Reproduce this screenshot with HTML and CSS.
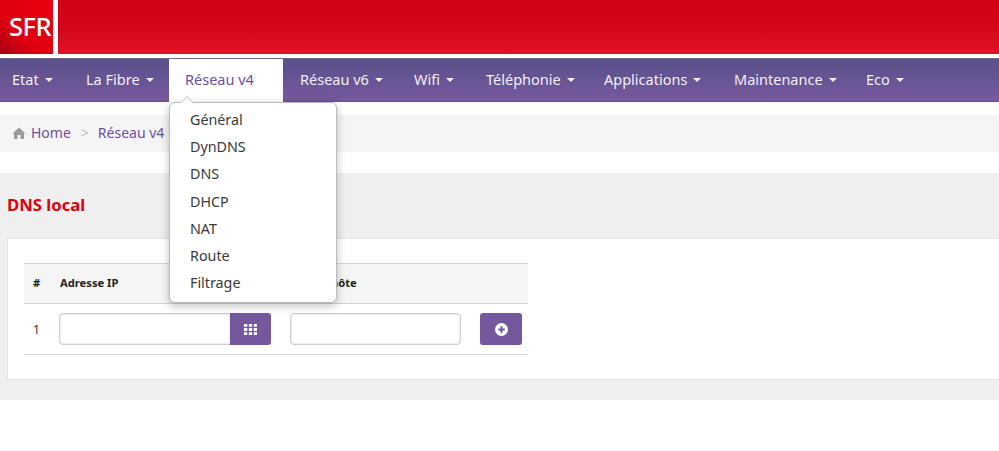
FILE: index.html
```html
<!DOCTYPE html>
<html lang="fr">
<head>
<meta charset="utf-8">
<title>SFR - Réseau v4</title>
<link rel="stylesheet" href="styles.css">
</head>
<body>
<header class="top">
  <div class="logo"><span>SFR</span></div>
  <div class="banner"></div>
</header>
<nav class="nav">
  <a class="item">Etat<i class="caret"></i></a>
  <a class="item">La Fibre<i class="caret"></i></a>
  <div class="item active">Réseau v4
    <ul class="menu">
      <li>Général</li>
      <li>DynDNS</li>
      <li>DNS</li>
      <li>DHCP</li>
      <li>NAT</li>
      <li>Route</li>
      <li>Filtrage</li>
    </ul>
  </div>
  <a class="item">Réseau v6<i class="caret"></i></a>
  <a class="item">Wifi<i class="caret"></i></a>
  <a class="item">Téléphonie<i class="caret"></i></a>
  <a class="item">Applications<i class="caret"></i></a>
  <a class="item">Maintenance<i class="caret"></i></a>
  <a class="item">Eco<i class="caret"></i></a>
</nav>
<div class="crumbs">
  <svg class="home" viewBox="0 0 14 12" width="14" height="12"><path d="M7 0.500 0.500 6.500 2 6.500 2 12 5.500 12 5.500 8 8.500 8 8.500 12 12 12 12 6.500 13.500 6.500Z"/></svg>
  <a>Home</a><span class="sep">&gt;</span><a>Réseau v4</a>
</div>
<main class="content">
  <h1>DNS local</h1>
  <section class="panel">
    <table class="grid">
      <thead>
        <tr><th class="c-num">#</th><th class="c-ip">Adresse IP</th><th class="c-host">Nom d'hôte</th><th class="c-act"></th></tr>
      </thead>
      <tbody>
        <tr>
          <td>1</td>
          <td><div class="group"><input class="field joined" type="text"><button class="btn joined-btn" type="button">
            <svg viewBox="0 0 12 12" width="13" height="13"><path d="M0 1h3v2.500H0zM4.500 1h3v2.500h-3zM9 1h3v2.500H9zM0 4.700h3v2.600H0zM4.500 4.700h3v2.600h-3zM9 4.700h3v2.600H9zM0 8.500h3V11H0zM4.500 8.500h3V11h-3zM9 8.500h3V11H9z"/></svg>
          </button></div></td>
          <td><input class="field host" type="text"></td>
          <td><button class="btn add" type="button">
            <svg viewBox="0 0 12 12" width="13" height="13"><path fill-rule="evenodd" d="M6 0a6 6 0 1 0 0 12A6 6 0 0 0 6 0ZM5 3h2v2h2v2H7v2H5V7H3V5h2Z"/></svg>
          </button></td>
        </tr>
      </tbody>
    </table>
  </section>
</main>
</body>
</html>
```
FILE: styles.css
```css
* { box-sizing: border-box; }
html, body { margin: 0; padding: 0; }
body {
  background: #fff;
  font-family: "Noto Sans", "Open Sans", sans-serif;
  font-size: 14px;
  color: #333;
  overflow: hidden;
}
.top { display: flex; height: 54px; background: #fff; }
.logo {
  width: 53px;
  height: 54px;
  background: linear-gradient(45deg, #a80016 0%, #dc0010 35%, #ea0010 100%);
  display: flex;
  align-items: center;
  justify-content: center;
  color: #fff;
  font-size: 25.5px;
  font-weight: 500;
  letter-spacing: -0.5px;
  padding: 0 0 3px 7px;
}
.banner {
  flex: 1;
  margin-left: 5px;
  background: linear-gradient(#d20016 0%, #d40519 50%, #e01426 100%);
}
.nav {
  margin-top: 4px;
  height: 44px;
  display: grid;
  grid-template-columns: 70px 99px 115px 114px 72px 118px 130px 132px 1fr;
  background: linear-gradient(#58508b 0%, #77589c 100%);
  border-top: 1px solid #6e6896;
  border-bottom: 1px solid #6a4f90;
}
.item {
  position: relative;
  display: flex;
  align-items: center;
  padding: 0 0 3px 16px;
  color: #f2eff7;
  font-size: 14.5px;
  white-space: nowrap;
}
.item:first-child { padding-left: 12px; }
.caret {
  display: inline-block;
  width: 0;
  height: 0;
  margin-left: 6px;
  margin-top: 2px;
  border-left: 4px solid transparent;
  border-right: 4px solid transparent;
  border-top: 4px solid #f2eff7;
}
.item.active {
  background: #fff;
  color: #6d4f9f;
  width: 114px;
  margin-bottom: -1px;
}
.menu {
  position: absolute;
  top: 43px;
  left: 0;
  z-index: 5;
  width: 168px;
  height: 201px;
  margin: 0;
  padding: 3px 0;
  list-style: none;
  background: #fff;
  border: 1px solid #bbb;
  border-radius: 6px;
  box-shadow: 0 3px 10px rgba(0, 0, 0, .25);
}
.menu::before {
  content: "";
  position: absolute;
  top: -5px;
  left: 12px;
  width: 9px;
  height: 9px;
  background: #fff;
  transform: rotate(45deg);
  border-left: 1px solid #ccc;
  border-top: 1px solid #ccc;
}
.menu li {
  height: 27.2px;
  line-height: 27px;
  padding-left: 20px;
  color: #3a3a3a;
  font-size: 14.3px;
}
.crumbs {
  margin-top: 13px;
  height: 37px;
  background: #f5f5f5;
  display: flex;
  align-items: center;
  padding: 0 0 2px 12px;
  color: #6d4f9f;
  font-size: 14px;
}
.home { fill: #9a9a9a; margin-right: 5px; }
.sep { color: #bbb; margin: 0 9px 0 10px; }
.content {
  margin-top: 21px;
  height: 227px;
  background: #efefef;
  padding: 0 0 0 7px;
}
h1 {
  margin: 0;
  padding-top: 22px;
  height: 65px;
  font-size: 16.7px;
  line-height: 20px;
  font-weight: 700;
  color: #e0000b;
}
.panel {
  height: 142px;
  margin-right: -2px;
  background: #fff;
  border: 1px solid #e4e4e4;
  padding: 24px 0 0 16px;
}
.grid {
  width: 504px;
  border-collapse: collapse;
  table-layout: fixed;
  font-size: 11.2px;
}
.grid th {
  height: 40px;
  background: #f5f5f5;
  border-top: 1px solid #d4d4d4;
  border-bottom: 1px solid #d4d4d4;
  text-align: left;
  font-weight: 700;
  color: #222;
  padding: 0 0 2px 1px;
}
.grid th.c-num { padding-left: 9px; }
.grid td {
  height: 51px;
  border-bottom: 1px solid #d4d4d4;
  padding: 0;
  vertical-align: middle;
}
.grid td:first-child { padding-left: 9px; color: #333; font-size: 12px; }
.c-num { width: 35px; }
.c-ip { width: 231px; }
.c-host { width: 190px; }
.group { display: flex; width: 212px; }
.field {
  height: 32px;
  border: 1px solid #cfcfcf;
  box-shadow: inset 0 0 0 1px #efefef;
  border-radius: 4px;
  background: #fff;
  display: block;
}
.joined { width: 171px; border-radius: 4px 0 0 4px; border-right: 0; }
.host { width: 171px; }
.btn {
  height: 32px;
  border: 0;
  background: #74589d;
  border-radius: 3px;
  display: flex;
  align-items: center;
  justify-content: center;
  padding: 0;
}
.btn svg { fill: #fff; }
.joined-btn { width: 41px; border-radius: 0 3px 3px 0; }
.add { width: 42px; }
```
